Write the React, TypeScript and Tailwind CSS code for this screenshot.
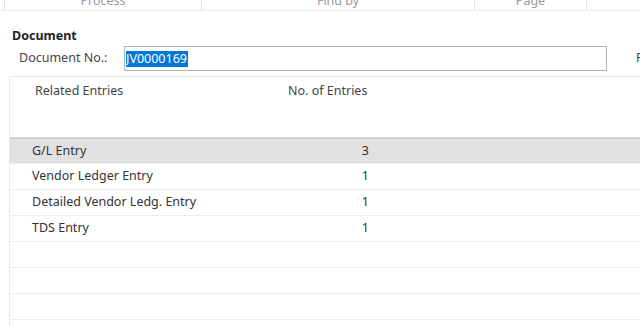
const rows = [
  { name: "G/L Entry", count: "3", selected: true },
  { name: "Vendor Ledger Entry", count: "1" },
  { name: "Detailed Vendor Ledg. Entry", count: "1" },
  { name: "TDS Entry", count: "1" },
  { name: "", count: "" },
  { name: "", count: "" },
  { name: "", count: "" },
  { name: "", count: "" },
];

export default function App() {
  return (
    <div className="w-[640px] h-[326px] bg-white overflow-hidden text-[12.5px] text-[#333] font-['Noto_Sans',sans-serif]">
      {/* ribbon tabs, mostly scrolled off */}
      <div className="h-[11px] flex border-b border-[#ececec] overflow-hidden">
        <div className="w-[4px] shrink-0" />
        <div className="w-[198px] shrink-0 border-l border-r border-[#e4e4e4] flex justify-center">
          <span className="leading-[13px] -mt-[6px] text-[#9a9a9a]">Process</span>
        </div>
        <div className="w-[273px] shrink-0 border-r border-[#e4e4e4] flex justify-center">
          <span className="leading-[13px] -mt-[6px] text-[#9a9a9a]">Find by</span>
        </div>
        <div className="w-[112px] shrink-0 border-r border-[#e4e4e4] flex justify-center">
          <span className="leading-[13px] -mt-[6px] text-[#9a9a9a]">Page</span>
        </div>
      </div>

      <div className="pl-[12px] pt-[16px]">
        <div className="font-bold text-[#222] leading-[17px]">Document</div>
        <div className="flex items-center mt-[2px]">
          <div className="pl-[7px] w-[112px] shrink-0 text-[#444]">Document No.:</div>
          <div className="w-[483px] h-[25px] shrink-0 border border-[#b5b5b5] flex items-center pl-[1px]">
            <span className="bg-[#0078d7] text-white leading-[16px] pr-[1px]">JV0000169</span>
          </div>
          <div className="ml-[29px] shrink-0 text-[#444]">F</div>
        </div>
      </div>

      <div className="mt-[5px] ml-[9px] border-l border-t border-[#e8e8e8]">
        <div className="h-[60px] flex pt-[5px] text-[#444]">
          <div className="w-[25px]" />
          <div className="w-[253px]">Related Entries</div>
          <div>No. of Entries</div>
        </div>
        {rows.map((r, i) => (
          <div
            key={i}
            className={
              r.selected
                ? "h-[26px] flex items-center bg-[#e1e1e1] border-t-2 border-[#d2d2d2]"
                : "h-[26px] flex items-center border-t border-[#ececec]"
            }
          >
            <div className="w-[22px]" />
            <div className="w-[300px]">{r.name}</div>
            <div className="w-[37px] text-right">{r.count}</div>
          </div>
        ))}
      </div>
    </div>
  );
}
